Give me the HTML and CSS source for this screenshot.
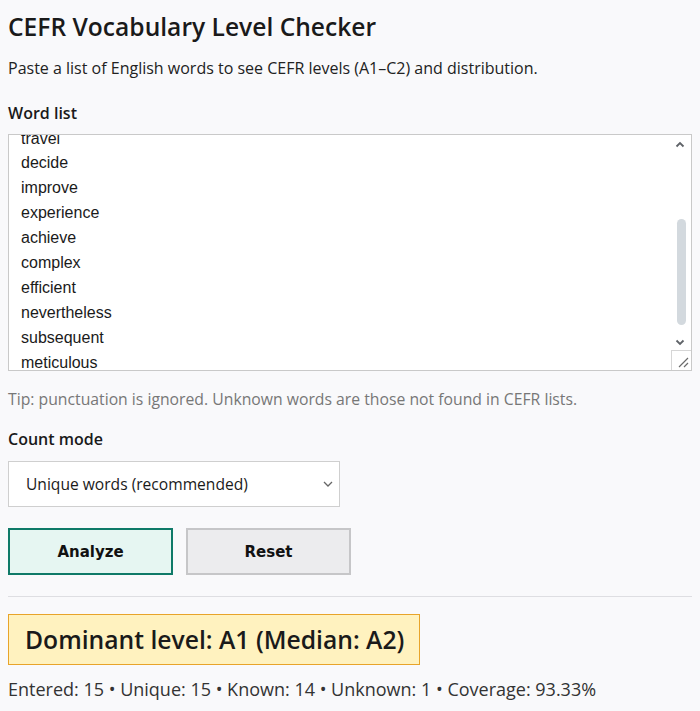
FILE: index.html
```html
<!DOCTYPE html>
<html lang="en">
<head>
<meta charset="utf-8">
<title>CEFR Vocabulary Level Checker</title>
<link rel="stylesheet" href="styles.css">
</head>
<body>
<main class="app">
  <h1 class="title">CEFR Vocabulary Level Checker</h1>
  <p class="sub">Paste a list of English words to see CEFR levels (A1–C2) and distribution.</p>

  <div class="field-label">Word list</div>
  <div class="textarea" role="textbox" aria-multiline="true">
    <div class="lines">
      <div>travel</div>
      <div>decide</div>
      <div>improve</div>
      <div>experience</div>
      <div>achieve</div>
      <div>complex</div>
      <div>efficient</div>
      <div>nevertheless</div>
      <div>subsequent</div>
      <div>meticulous</div>
    </div>
    <div class="sb-up"><svg width="10" height="7" viewBox="0 0 10 7"><path d="M1.5 5.5 L5 2 L8.5 5.5" fill="none" stroke="#5f6368" stroke-width="1.8"/></svg></div>
    <div class="sb-thumb"></div>
    <div class="sb-down"><svg width="10" height="7" viewBox="0 0 10 7"><path d="M1.5 1.5 L5 5 L8.5 1.5" fill="none" stroke="#5f6368" stroke-width="1.8"/></svg></div>
    <div class="sb-corner"><svg width="12" height="12" viewBox="0 0 12 12"><path d="M2 11 L11 2 M7 11 L11 7" fill="none" stroke="#6b6b6b" stroke-width="1.2"/></svg></div>
  </div>
  <p class="tip">Tip: punctuation is ignored. Unknown words are those not found in CEFR lists.</p>

  <div class="field-label label-count">Count mode</div>
  <div class="select-wrap">
    <div class="select">Unique words (recommended)</div>
    <svg class="chev" width="10" height="6" viewBox="0 0 10 6"><path d="M1 1 L5 5 L9 1" fill="none" stroke="#666" stroke-width="1.3"/></svg>
  </div>

  <div class="actions">
    <button class="btn btn-primary">Analyze</button>
    <button class="btn btn-secondary">Reset</button>
  </div>

  <hr class="divider">

  <div class="dominant">Dominant level: A1 (Median: A2)</div>
  <p class="stats">Entered: 15 • Unique: 15 • Known: 14 • Unknown: 1 • Coverage: 93.33%</p>
</main>
</body>
</html>
```
FILE: styles.css
```css
* { box-sizing: border-box; }
html, body { margin: 0; padding: 0; }
body {
  background: #f9f9fb;
  color: #1c1c1c;
  font-family: "Open Sans", "Noto Sans", sans-serif;
}
.app { padding: 0 8px 8px; }

.title {
  margin: 12px 0 0;
  font-size: 24.6px;
  line-height: 30px;
  font-weight: 600;
  color: #1a1a1a;
}
.sub {
  margin: 15px 0 0;
  font-size: 16px;
  line-height: 22px;
  color: #222;
}
.field-label {
  margin-top: 23px;
  font-size: 16px;
  line-height: 22px;
  font-weight: 600;
  color: #1a1a1a;
}
.textarea {
  position: relative;
  margin-top: 10px;
  height: 237px;
  background: #fff;
  border: 1px solid #c9c9c9;
  overflow: hidden;
}
.lines {
  margin-top: -8.5px;
  padding-left: 12px;
  font-family: "Liberation Sans", Arial, sans-serif;
  font-size: 16px;
  line-height: 24.9px;
  color: #1a1a1a;
}
.sb-up, .sb-down {
  position: absolute;
  right: 6px;
  width: 10px;
  height: 7px;
  display: flex;
}
.sb-up { top: 6px; }
.sb-down { top: 204px; }
.sb-thumb {
  position: absolute;
  right: 5px;
  top: 84px;
  width: 9px;
  height: 106px;
  border-radius: 5px;
  background: #d3d9de;
}
.sb-corner {
  position: absolute;
  right: 0;
  bottom: 0;
  width: 20px;
  height: 20px;
  border-left: 1px solid #d6d6d6;
  border-top: 1px solid #d6d6d6;
  display: flex;
  align-items: flex-end;
  justify-content: flex-end;
  padding: 0 2px 2px 0;
}
.tip {
  margin: 17px 0 0;
  font-size: 15.75px;
  line-height: 22px;
  color: #777;
}
.label-count { margin-top: 18px; }

.select-wrap {
  position: relative;
  margin-top: 11px;
  width: 332px;
}
.select {
  height: 46px;
  border: 1px solid #cfcfcf;
  background: #fff;
  padding: 0 16px 0 17px;
  display: flex;
  align-items: center;
  font-size: 15.6px;
  color: #1a1a1a;
}
.chev {
  position: absolute;
  right: 7px;
  top: 20px;
}

.actions {
  margin-top: 21px;
  display: flex;
  gap: 13px;
}
.btn {
  width: 165px;
  height: 47px;
  font-family: "DejaVu Sans", Verdana, sans-serif;
  font-weight: 700;
  font-size: 15px;
  color: #111;
  cursor: pointer;
}
.btn-primary {
  background: #e6f6f2;
  border: 2px solid #0f7a68;
}
.btn-secondary {
  background: #ececee;
  border: 2px solid #c6c6c8;
}

.divider {
  margin: 21px 0 0;
  border: 0;
  border-top: 1px solid #dedee2;
  height: 0;
}

.dominant {
  margin-top: 17px;
  display: inline-flex;
  align-items: center;
  height: 51px;
  padding: 0 15px 0 16px;
  background: #fff2bf;
  border: 1px solid #e8a42a;
  font-size: 24.7px;
  font-weight: 600;
  color: #1a1a1a;
}
.stats {
  margin: 12px 0 0;
  font-size: 18px;
  line-height: 24px;
  color: #333;
}
```
